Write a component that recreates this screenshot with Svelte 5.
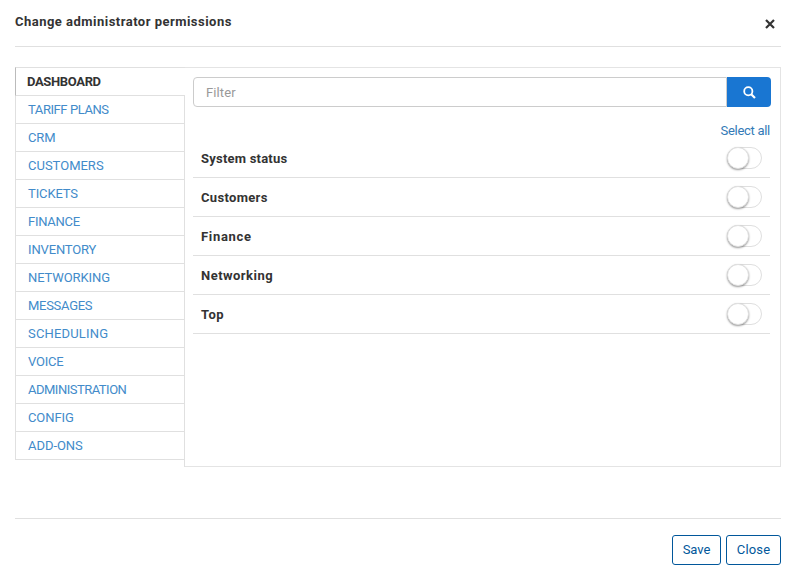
<script>
  const tabs = [
    ['DASHBOARD', -0.35], ['TARIFF PLANS', -0.42], ['CRM', -0.1], ['CUSTOMERS', 0], ['TICKETS', -0.12],
    ['FINANCE', -0.28], ['INVENTORY', -0.15], ['NETWORKING', -0.1], ['MESSAGES', -0.28], ['SCHEDULING', 0.17],
    ['VOICE', -0.25], ['ADMINISTRATION', -0.5], ['CONFIG', -0.1], ['ADD-ONS', -0.05]
  ];
  const groups = [['System status', 0.22], ['Customers', 0.32], ['Finance', 0.7], ['Networking', 0.47], ['Top', 0.5]];
  let active = $state(0);
</script>

<div class="dialog">
  <header>
    <h1>Change administrator permissions</h1>
    <button class="x" aria-label="Dismiss">
      <svg width="10" height="10" viewBox="0 0 10 10"><path d="M1 1L9 9M9 1L1 9" stroke="#333" stroke-width="2.2" fill="none" /></svg>
    </button>
  </header>
  <main>
    <nav>
      {#each tabs as [name, spacing], i}
        <button class="tab" class:active={i === active} onclick={() => (active = i)}><span style:letter-spacing="{spacing}px">{name}</span></button>
      {/each}
      <div class="rest"></div>
    </nav>
    <section>
      <div class="search">
        <input placeholder="Filter" />
        <button aria-label="Search">
          <svg width="13" height="13" viewBox="0 0 13 13"><circle cx="5.3" cy="5.2" r="4.1" fill="none" stroke="#fff" stroke-width="1.8" /><path d="M8.2 8.2L12 12" stroke="#fff" stroke-width="2.2" /></svg>
        </button>
      </div>
      <div class="all"><span>Select all</span></div>
      {#each groups as [name, spacing]}
        <div class="row"><b style:letter-spacing="{spacing}px">{name}</b><span class="switch"><i></i></span></div>
      {/each}
    </section>
  </main>
  <footer>
    <button class="save">Save</button>
    <button class="close">Close</button>
  </footer>
</div>

<style>
  :global(body) { background: #fff; }
  .dialog, .dialog * { box-sizing: border-box; }
  .dialog { width: 801px; height: 574px; padding: 0 20px 0 15px; color: #333; font: 13px/18px Roboto, "Liberation Sans", sans-serif; overflow: hidden; }
  button { font: inherit; background: none; border: 0; padding: 0; margin: 0; cursor: pointer; }
  header { height: 47px; border-bottom: 1px solid #e0e0e0; display: flex; justify-content: space-between; align-items: flex-start; padding: 12px 6px 0 0; }
  h1 { margin: 0; font-size: 13px; line-height: 19px; font-weight: 700; letter-spacing: .48px; white-space: nowrap; }
  .x { width: 10px; height: 10px; margin-top: 7px; }
  svg { display: block; }
  main { display: flex; height: 400px; margin-top: 20px; }
  nav { width: 170px; display: flex; flex-direction: column; }
  .tab { height: 28px; flex: none; text-align: left; color: #428bca; padding: 0 0 0 12px; border-left: 1px solid #e0e0e0; border-right: 1px solid #e0e0e0; border-bottom: 1px solid #e0e0e0; white-space: nowrap; }
  .tab.active { height: 29px; padding-left: 11px; color: #333; font-weight: 700; border-top: 1px solid #e0e0e0; border-left-color: #bbb; border-right: 0; }
  .rest { flex: 1; border-right: 1px solid #e0e0e0; }
  section { flex: 1; min-width: 0; border: 1px solid #e4e4e4; border-left: 0; padding: 9px 10px 0 8px; }
  .search { display: flex; height: 30px; width: 578px; }
  input { flex: 1; min-width: 0; height: 30px; border: 1px solid #ccc; border-radius: 4px 0 0 4px; padding: 0 12px; font: 13px Roboto, sans-serif; letter-spacing: .1px; outline: 0; }
  input::placeholder { color: #999; opacity: 1; }
  .search button { width: 44px; background: #1976d2; border-radius: 0 4px 4px 0; display: flex; align-items: center; justify-content: center; padding-top: 1px; }
  .all { height: 32px; display: flex; justify-content: flex-end; align-items: flex-end; line-height: 17px; color: #337ab7; letter-spacing: -.28px; }
  .row { height: 39px; width: 577px; display: flex; align-items: center; justify-content: space-between; padding: 0 8px; border-bottom: 1px solid #e0e0e0; }
  .row b { line-height: 16px; padding-top: 2px; }
  .switch { width: 35px; height: 22px; border-radius: 11px; border: 1px solid #dfdfdf; display: block; }
  .switch i { display: block; width: 22px; height: 22px; margin: -1px; border-radius: 50%; background: #fff; border: 1px solid #e0e0e0; box-shadow: 0 1px 2px rgba(0,0,0,.4); }
  footer { margin-top: 51px; border-top: 1px solid #e0e0e0; padding-top: 16px; display: flex; justify-content: flex-end; gap: 5px; }
  footer button { height: 30px; border: 1px solid #01579b; border-radius: 3px; color: #01579b; }
  .save { width: 49px; letter-spacing: -.05px; }
  .close { width: 55px; letter-spacing: .15px; }
  header, footer { width: 766px; }
</style>
